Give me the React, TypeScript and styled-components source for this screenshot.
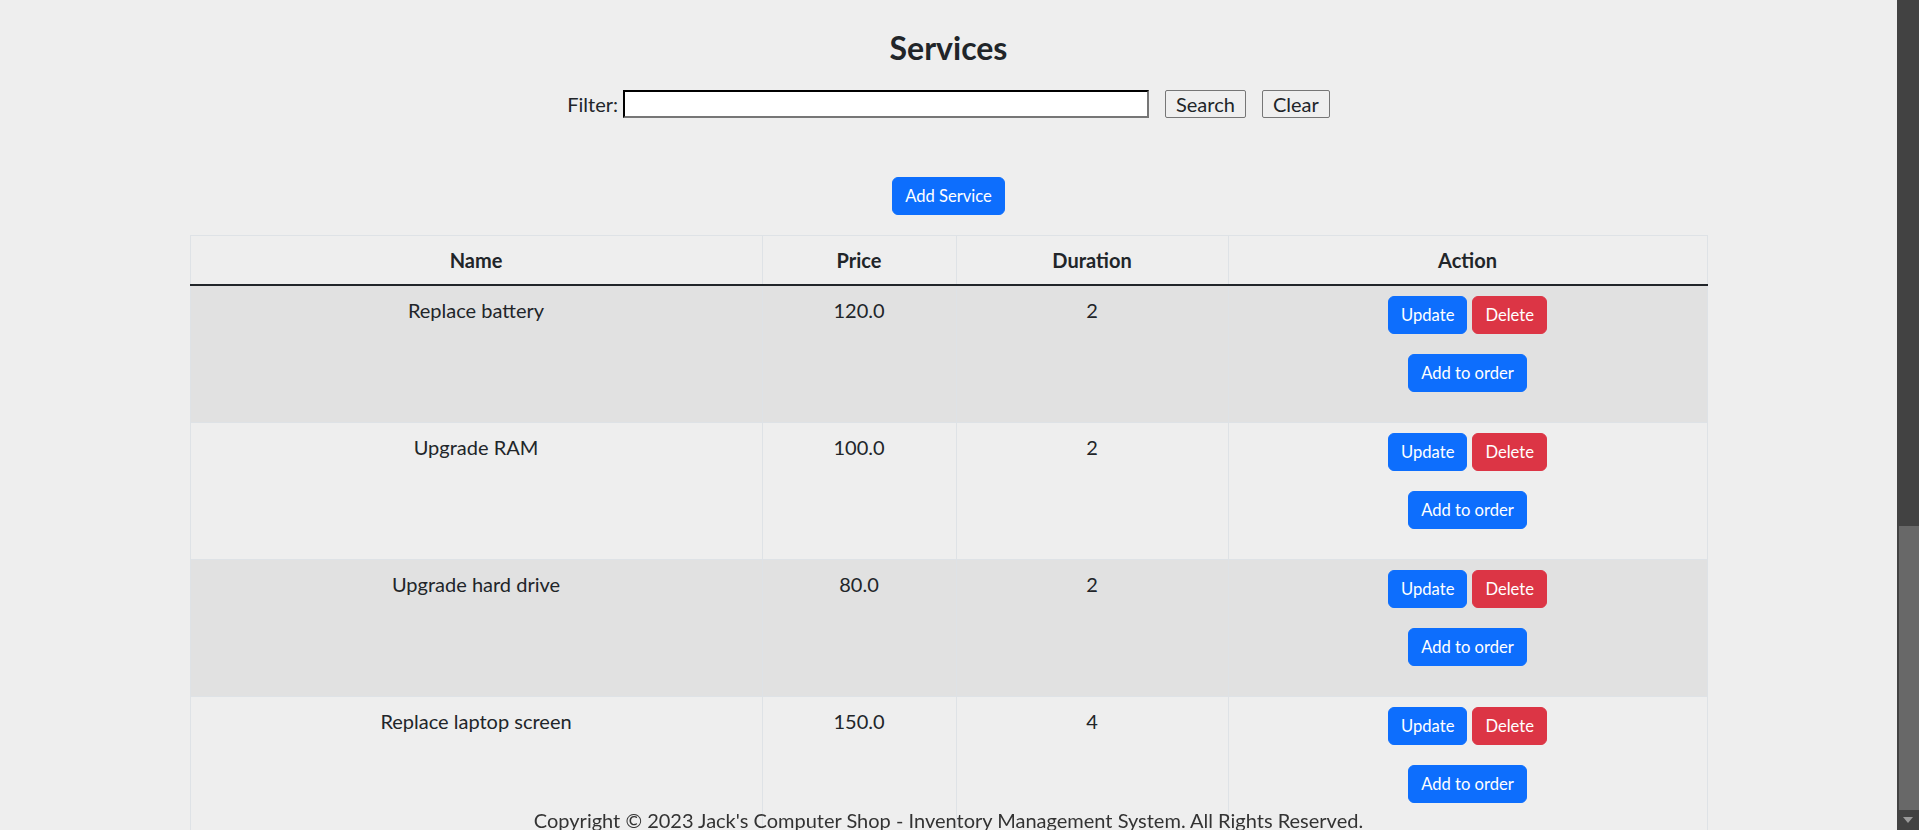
import * as React from "react";
import styled, { createGlobalStyle } from "styled-components";

const COLORS = {
	PAGE: "#eeeeee",
	TEXT: "#212529",
	BORDER: "#dee2e6",
	STRIPE: "#e1e1e1",
	PRIMARY: "#0d6efd",
	DANGER: "#dc3545",
	SCROLL_TRACK: "#424242",
	SCROLL_THUMB: "#686868"
};

type Service = {
	name: string;
	price: string;
	duration: number;
};

const SERVICES: Service[] = [
	{ name: "Replace battery", price: "120.0", duration: 2 },
	{ name: "Upgrade RAM", price: "100.0", duration: 2 },
	{ name: "Upgrade hard drive", price: "80.0", duration: 2 },
	{ name: "Replace laptop screen", price: "150.0", duration: 4 }
];

const GlobalStyle = createGlobalStyle`
	html, body {
		margin: 0;
		padding: 0;
		background: ${COLORS.PAGE};
		overflow: hidden;
	}
	body {
		font-family: Lato, "Open Sans", sans-serif;
		color: ${COLORS.TEXT};
		font-size: 16px;
	}
`;

export default function App() {
	return (
		<>
			<GlobalStyle />
			<Viewport>
				<Main>
					<Title>Services</Title>
					<FilterRow>
						<FilterLabel htmlFor="filter">Filter:</FilterLabel>
						<FilterInput id="filter" type="text" />
						<PlainButton>Search</PlainButton>
						<PlainButton>Clear</PlainButton>
					</FilterRow>
					<AddButton>Add Service</AddButton>
					<Table>
						<colgroup>
							<col style={{ width: 572 }} />
							<col style={{ width: 194 }} />
							<col style={{ width: 272 }} />
							<col style={{ width: 479 }} />
						</colgroup>
						<thead>
							<tr>
								<Th>Name</Th>
								<Th>Price</Th>
								<Th>Duration</Th>
								<Th>Action</Th>
							</tr>
						</thead>
						<tbody>
							{SERVICES.map((s, i) => (
								<Row key={s.name} striped={i % 2 === 0}>
									<Td>{s.name}</Td>
									<Td>{s.price}</Td>
									<Td>{s.duration}</Td>
									<ActionTd>
										<Actions>
											<ButtonPair>
												<Btn variant="primary">Update</Btn>
												<Btn variant="danger">Delete</Btn>
											</ButtonPair>
											<Btn variant="primary">Add to order</Btn>
										</Actions>
									</ActionTd>
								</Row>
							))}
						</tbody>
					</Table>
				</Main>
				<ScrollBar>
					<ScrollSpacer />
					<ScrollThumb />
					<ScrollArrow>
						<svg width="10" height="6" viewBox="0 0 10 6">
							<path d="M0 0 H10 L5 6 Z" fill="#9a9a9a" />
						</svg>
					</ScrollArrow>
				</ScrollBar>
			</Viewport>
			<Footer>
				Copyright © 2023 Jack's Computer Shop - Inventory Management System. All
				Rights Reserved.
			</Footer>
		</>
	);
}

const Viewport = styled.div`
	display: flex;
	height: 100vh;
	overflow: hidden;
`;

const Main = styled.main`
	flex: 1;
	min-width: 0;
	display: flex;
	flex-direction: column;
	align-items: center;
	padding-top: 29px;
	overflow: hidden;
`;

const Title = styled.h2`
	margin: 0;
	font-size: 32px;
	font-weight: 700;
	line-height: 1.2;
`;

const FilterRow = styled.div`
	display: flex;
	align-items: center;
	margin-top: 23px;
	height: 28px;
`;

const FilterLabel = styled.label`
	font-size: 20px;
	margin-right: 5px;
`;

const FilterInput = styled.input`
	box-sizing: border-box;
	width: 526px;
	height: 28px;
	border: 2px inset #767676;
	border-top-color: #111;
	border-left-color: #111;
	background: #fff;
	margin-right: 16px;
	padding: 1px 2px;
	font-family: Lato, sans-serif;
	font-size: 18px;
`;

const PlainButton = styled.button`
	box-sizing: border-box;
	height: 28px;
	padding: 0 10px;
	margin-right: 16px;
	font-family: Lato, sans-serif;
	font-size: 20px;
	line-height: 24px;
	color: ${COLORS.TEXT};
	background: #efefef;
	border: 1px solid #767676;
	border-radius: 2px;

	&:last-child {
		margin-right: 0;
	}
`;

const AddButton = styled.button`
	margin-top: 59px;
	padding: 6px 12px;
	font-family: Lato, sans-serif;
	font-size: 16.6px;
	line-height: 24px;
	color: #fff;
	background: ${COLORS.PRIMARY};
	border: 1px solid ${COLORS.PRIMARY};
	border-radius: 6px;
`;

const Table = styled.table`
	margin-top: 20px;
	width: 1517px;
	table-layout: fixed;
	border-collapse: collapse;
	border: 1px solid ${COLORS.BORDER};
	font-size: 20px;
	line-height: 24px;
`;

const Th = styled.th`
	padding: 12px 8px;
	font-weight: 700;
	text-align: center;
	border: 1px solid ${COLORS.BORDER};
	border-bottom: 2px solid ${COLORS.TEXT};
`;

const Row = styled.tr<{ striped: boolean }>`
	background: ${props => (props.striped ? COLORS.STRIPE : "transparent")};
`;

const Td = styled.td`
	padding: 12px 8px 30px;
	text-align: center;
	vertical-align: top;
	border: 1px solid ${COLORS.BORDER};
`;

const ActionTd = styled(Td)`
	padding-top: 10px;
`;

const Actions = styled.div`
	display: flex;
	flex-direction: column;
	align-items: center;
	gap: 20px;
`;

const ButtonPair = styled.div`
	display: flex;
	gap: 5px;
`;

const Btn = styled.button<{ variant: "primary" | "danger" }>`
	padding: 6px 12px;
	font-family: Lato, sans-serif;
	font-size: 16.6px;
	line-height: 24px;
	color: #fff;
	background: ${props => (props.variant === "danger" ? COLORS.DANGER : COLORS.PRIMARY)};
	border: 1px solid ${props => (props.variant === "danger" ? COLORS.DANGER : COLORS.PRIMARY)};
	border-radius: 6px;
`;

const ScrollBar = styled.div`
	width: 22px;
	flex-shrink: 0;
	display: flex;
	flex-direction: column;
	background: ${COLORS.SCROLL_TRACK};
`;

const ScrollSpacer = styled.div`
	height: 526px;
`;

const ScrollThumb = styled.div`
	height: 284px;
	margin-left: 2px;
	background: ${COLORS.SCROLL_THUMB};
`;

const ScrollArrow = styled.div`
	flex: 1;
	display: flex;
	align-items: center;
	justify-content: center;
`;

const Footer = styled.footer`
	position: fixed;
	left: 0;
	right: 22px;
	bottom: -5px;
	text-align: center;
	font-size: 20px;
	line-height: 30px;
	color: #333;
`;
